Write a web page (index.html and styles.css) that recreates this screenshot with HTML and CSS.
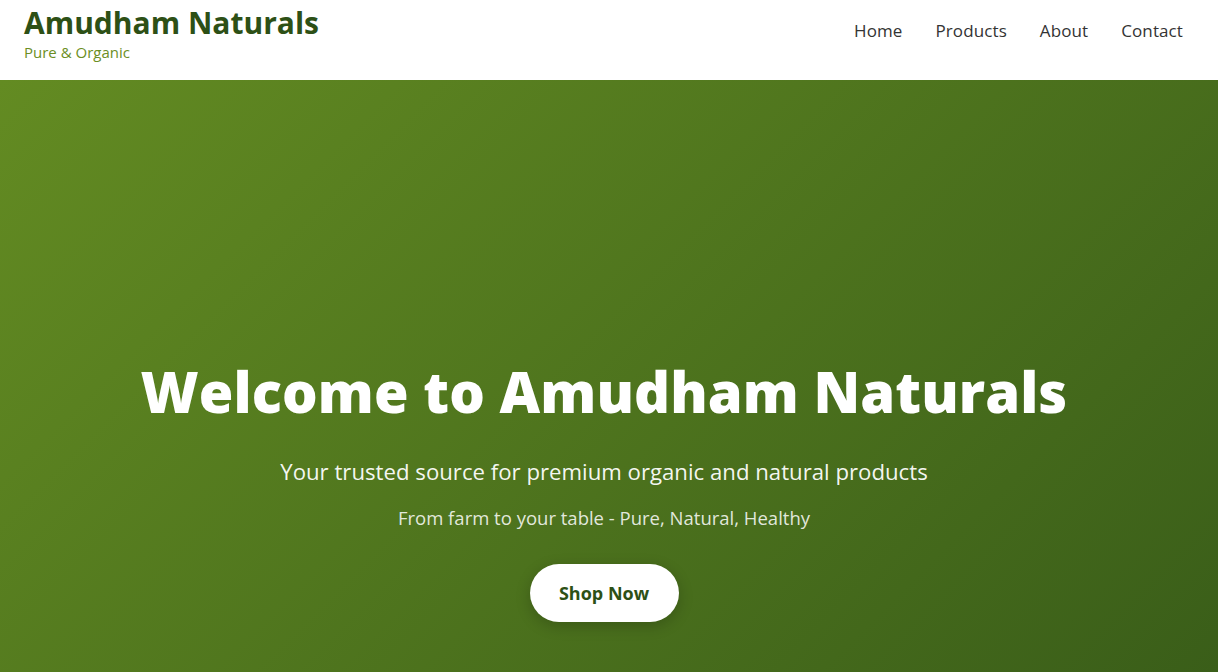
FILE: index.html
```html
<!DOCTYPE html>
<html lang="en">
<head>
<meta charset="utf-8">
<title>Amudham Naturals</title>
<link rel="stylesheet" href="styles.css">
</head>
<body>
<header class="site-header">
  <div class="brand">
    <div class="brand-name">Amudham Naturals</div>
    <div class="brand-tag">Pure &amp; Organic</div>
  </div>
  <nav class="nav">
    <a href="#">Home</a>
    <a href="#">Products</a>
    <a href="#">About</a>
    <a href="#">Contact</a>
  </nav>
</header>
<section class="hero">
  <h1 class="hero-title">Welcome to Amudham Naturals</h1>
  <p class="hero-sub">Your trusted source for premium organic and natural products</p>
  <p class="hero-note">From farm to your table - Pure, Natural, Healthy</p>
  <a class="hero-btn" href="#">Shop Now</a>
</section>
</body>
</html>
```
FILE: styles.css
```css
* { box-sizing: border-box; }
html, body { margin: 0; padding: 0; }
body {
  font-family: "Open Sans", "Liberation Sans", sans-serif;
  background: #fff;
  overflow: hidden;
}
.site-header {
  height: 80px;
  background: #fff;
  display: flex;
  align-items: center;
  justify-content: space-between;
  padding: 0 35px 0 24px;
}
.brand { display: flex; flex-direction: column; margin-top: -13px; }
.brand-name {
  font-size: 30px;
  font-weight: 700;
  color: #2d5016;
  line-height: 36px;
}
.brand-tag {
  font-size: 15px;
  color: #6b8e23;
  line-height: 20px;
  margin-top: 1px;
}
.nav { display: flex; gap: 33px; margin-top: -20px; }
.nav a {
  color: #333;
  text-decoration: none;
  font-size: 17px;
  letter-spacing: 0.1px;
}
.hero {
  height: 592px;
  background: linear-gradient(135deg, #638b22 0%, #3a5e19 100%);
  display: flex;
  flex-direction: column;
  align-items: center;
  padding: 271px 10px 0 0;
  color: #fff;
  text-align: center;
}
.hero-title {
  margin: 0;
  font-size: 56px;
  font-weight: 800;
  line-height: 80px;
  letter-spacing: 0.1px;
}
.hero-sub {
  margin: 26px 0 0;
  font-size: 22.2px;
  line-height: 30px;
  color: rgba(255,255,255,0.95);
}
.hero-note {
  margin: 18px 0 0;
  font-size: 18.5px;
  line-height: 26px;
  color: rgba(255,255,255,0.85);
}
.hero-btn {
  margin-top: 33px;
  width: 149px;
  height: 58px;
  border-radius: 29px;
  background: #fff;
  color: #2d5016;
  font-weight: 700;
  font-size: 18px;
  text-decoration: none;
  display: flex;
  align-items: center;
  justify-content: center;
  box-shadow: 0 4px 15px rgba(0,0,0,0.2);
}
```
